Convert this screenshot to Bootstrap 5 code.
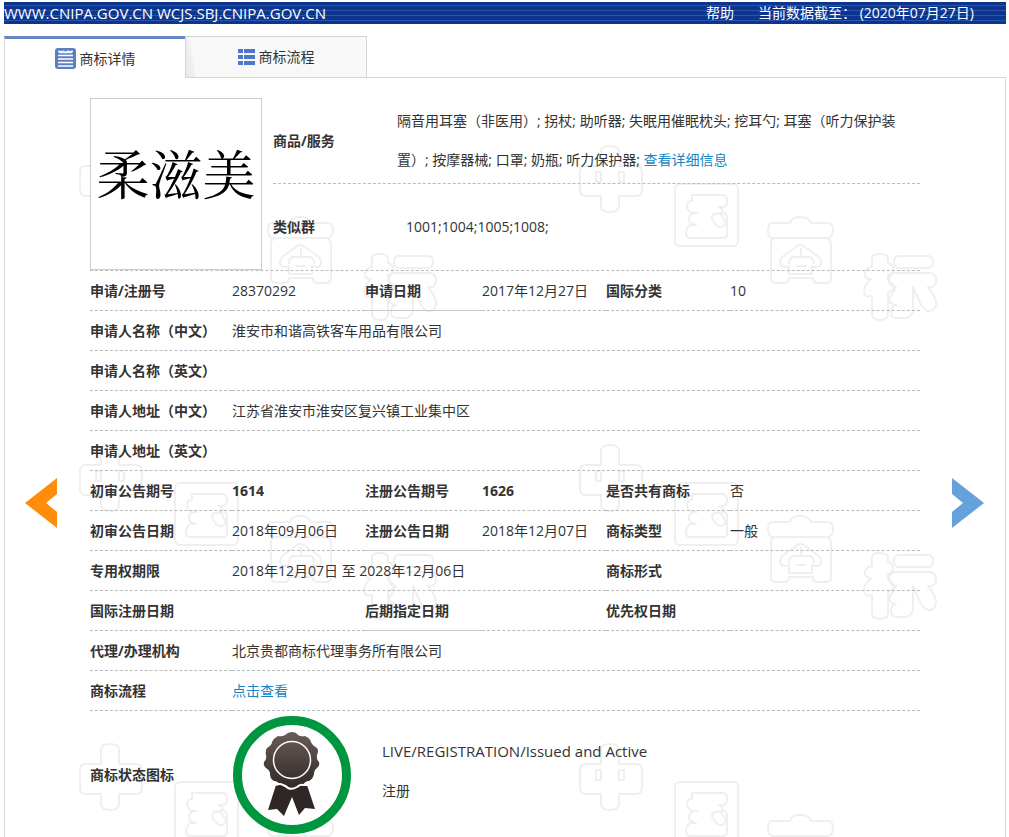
<!DOCTYPE html>
<html lang="zh-CN">
<head>
<meta charset="utf-8">
<meta name="viewport" content="width=device-width, initial-scale=1">
<title>商标详情</title>
<link href="https://cdn.jsdelivr.net/npm/bootstrap@5.3.0/dist/css/bootstrap.min.css" rel="stylesheet">
<style>
body{font-family:"Open Sans","Noto Sans CJK SC",sans-serif;font-size:14px;line-height:20px;color:#333;background:#fff}
a{color:#1585c3;text-decoration:none}
.page{padding:2px 3px 0 4px}
.topbar{height:22px;color:#fff;background:repeating-linear-gradient(#0c3590 0 3px,#2a55ab 3px 4px,#0c3590 4px 5px);padding-right:32px}
.topbar a{color:#fff}
.latin{font-size:15px}
.tabs{margin-top:12px;height:42px;border-bottom:1px solid #d5d5d5}
.tabs .nav-link{width:181px;height:41px;padding:0;border:1px solid #d5d5d5;border-bottom:0;border-radius:0;color:#333;font-size:14px}
.tabs .nav-link.active{height:42px;border-top:3px solid #6a87c4;border-right:0;background:#fff}
.tabs .nav-link:not(.active){width:182px;background:linear-gradient(80deg,#e8e8e8 0,#f0f0f0 9px,#f8f8f8 10px)}
.panel{border:solid #d5d5d5;border-width:0 1px;overflow:hidden}
.watermark{z-index:0;pointer-events:none}
.content-layer{z-index:1}
.side{width:85px;padding-top:400px}
.side button{width:32px;height:50px}
.summary{margin-top:20px;border-bottom:1px dashed #bbb}
.mark-image{width:172px;height:172px;border:1px solid #ccc;background:#fff;margin-right:11px;color:#000;font:400 53px/60px "Noto Serif CJK SC","Noto Sans CJK SC",serif;padding-bottom:24px}
.mark-image span{white-space:nowrap}
.goods{height:86px;border-bottom:1px dashed #bbb}
.goods dd{line-height:39px;padding:0 14px 2px 0}
.goods dt,.groups dt{width:124px;flex:none}
.groups{height:86px}
.groups dd{padding-left:9px}
.detail{table-layout:fixed;width:100%;margin:0;border-collapse:separate;border-spacing:0}
.detail th,.detail td{height:40px;padding:0;border-bottom:1px dashed #bbb;vertical-align:middle;white-space:nowrap}
.detail th,dt{font-weight:700}
.detail .rule{border-bottom-style:solid;border-bottom-color:#c8c8c8}
.detail .status th,.detail .status td{height:127px;border:0}
.c1{width:142px}.c2{width:133px}.c3{width:117px}.c4{width:124px}.c5{width:124px}
.status-text{line-height:39px;padding:0 0 8px 30px}
</style>
</head>
<body>
<div class="page">
<header class="topbar d-flex justify-content-between align-items-center">
<span class="latin">WWW.CNIPA.GOV.CN WCJS.SBJ.CNIPA.GOV.CN</span>
<div class="d-flex"><a href="#" class="me-4">帮助</a><span>当前数据截至： (2020年07月27日)</span></div>
</header>
<nav class="tabs d-flex">
<a class="nav-link active d-flex align-items-center justify-content-center gap-1" href="#">
<svg width="21" height="21" viewBox="0 0 21 21" aria-hidden="true"><rect width="21" height="21" rx="3" fill="#5c7fc2"/><path d="M3 3.500h2v1h2v-1h2v1h3v-1h2v1h2v-1h2M3 7.500h15M3 11h15M3 14.500h15M3 18h15" fill="none" stroke="#fff" stroke-width="1.500"/></svg>
<span>商标详情</span></a>
<a class="nav-link d-flex align-items-center justify-content-center gap-1" href="#">
<svg width="17" height="16" viewBox="0 0 17 16" fill="#5076c8" aria-hidden="true"><path d="M0 0h5v4H0zM6 0h11v4H6zM0 6h5v4H0zM6 6h11v4H6zM0 12h5v4H0zM6 12h11v4H6z"/></svg>
<span>商标流程</span></a>
</nav>
<main class="panel position-relative">
<svg class="watermark position-absolute top-0 start-0 w-100 h-100" aria-hidden="true">
<defs>
<pattern id="wm" width="500" height="299" patternUnits="userSpaceOnUse" x="74" y="64">
<g fill="none" stroke="#efefef" stroke-width="2" stroke-linejoin="round">
<path d="M22 24V10q0-6 9-6t9 6v14h17q6 0 6 6v18q0 6-6 6H40v10q0 6-9 6t-9-6V54H7q-6 0-6-6V30q0-6 6-6z"/>
<rect x="17" y="30" width="5" height="10"/><rect x="40" y="30" width="5" height="10"/>
<rect x="96" y="42" width="63" height="62" rx="5"/>
<path d="M113 53h30q5 0 5 6t-5 6h-3q5 2 3 6l-8 1q-4 4 0 8 4 6 8 5 6-2 2-8l-4-6q5-2 7 3v18q0 4-4 4h-33q-4 0-4-5t4-8h6q-7-1-7-6t5-6h3q-10 0-10-6t5-6z"/>
<path d="M211 81q1-6 10-6t11 6h17q5 0 5 7t-5 8h-2q5 1 5 6v34q0 5-5 5h-8q-5 0-5-5h-24q0 5-5 5h-8q-5 0-5-5v-34q0-5 4-6h-2q-5 0-5-8t5-7zM196 96h51"/>
<path d="m217 105-14 10q-4 6 0 9 4 2 7 0v8h23v-8q4 2 8 0 3-4-1-9l-14-10q-5-4-9 0zM222 106v10M210 122q0-7 5-7h15q5 0 5 7M217 124h10"/>
<path d="M293 116q0-4 8-4t8 5v4q5 1 5 6t-5 6v5l6 6q-1 6-6 6v22q0 6-8 6t-8-6v-18q-8 2-8-5 0-5 7-12-6 0-6-5 0-6 7-7zM320 114h29q5 0 5 6t-5 6h-29q-5 0-5-6t5-6zM316 131h34q7 0 7 7t-6 7h-2q9 11 8 18-2 7-8 6-5 0-10-13l-5-11v22q0 7-7 9h-10q-5 0-5-6t5-7q-7-1-7-6l7-12q-7-1-7-7t6-7z"/>
</g>
</pattern>
</defs>
<rect width="100%" height="100%" fill="url(#wm)"/>
</svg>
<div class="content-layer position-relative d-flex align-items-start">
<div class="side flex-shrink-0 ps-3"><button class="btn p-0 border-0 ms-1 d-block" type="button" aria-label="上一条"><svg class="d-block" width="32" height="50" viewBox="0 0 32 50"><path d="M0 25 32 0v16L21 25l11 9v16z" fill="#ff8c0a"/></svg></button></div>
<div class="flex-grow-1">
<section class="summary d-flex">
<div class="mark-image flex-shrink-0 d-flex align-items-center justify-content-center"><span>柔滋美</span></div>
<div class="flex-grow-1">
<dl class="goods d-flex align-items-center mb-0"><dt>商品/服务</dt><dd class="mb-0">隔音用耳塞（非医用）; 拐杖; 助听器; 失眠用催眠枕头; 挖耳勺; 耳塞（听力保护装置）; 按摩器械; 口罩; 奶瓶; 听力保护器; <a href="#">查看详细信息</a></dd></dl>
<dl class="groups d-flex align-items-center mb-0"><dt>类似群</dt><dd class="mb-0">1001;1004;1005;1008;</dd></dl>
</div>
</section>
<table class="detail">
<colgroup><col class="c1"><col class="c2"><col class="c3"><col class="c4"><col class="c5"><col></colgroup>
<tbody>
<tr><th scope="row">申请/注册号</th><td>28370292</td><th class="rule">申请日期</th><td>2017年12月27日</td><th>国际分类</th><td>10</td></tr>
<tr><th scope="row">申请人名称（中文）</th><td colspan="5">淮安市和谐高铁客车用品有限公司</td></tr>
<tr><th scope="row">申请人名称（英文）</th><td colspan="5"></td></tr>
<tr><th scope="row">申请人地址（中文）</th><td colspan="5">江苏省淮安市淮安区复兴镇工业集中区</td></tr>
<tr><th scope="row">申请人地址（英文）</th><td colspan="5"></td></tr>
<tr><th scope="row">初审公告期号</th><td class="fw-bold">1614</td><th>注册公告期号</th><td class="fw-bold">1626</td><th>是否共有商标</th><td>否</td></tr>
<tr><th scope="row">初审公告日期</th><td>2018年09月06日</td><th class="rule">注册公告日期</th><td>2018年12月07日</td><th>商标类型</th><td>一般</td></tr>
<tr><th scope="row">专用权期限</th><td colspan="3">2018年12月07日 至 2028年12月06日</td><th>商标形式</th><td></td></tr>
<tr><th scope="row">国际注册日期</th><td></td><th class="rule">后期指定日期</th><td></td><th>优先权日期</th><td></td></tr>
<tr><th scope="row">代理/办理机构</th><td colspan="5">北京贵都商标代理事务所有限公司</td></tr>
<tr><th scope="row">商标流程</th><td colspan="5"><a href="#">点击查看</a></td></tr>
<tr class="status"><th scope="row">商标状态图标</th><td colspan="5"><div class="d-flex align-items-center">
<svg width="120" height="120" viewBox="0 0 120 120" role="img" aria-label="注册">
<defs><linearGradient id="ribbon" x2="0" y2="1"><stop stop-color="#6a5d59"/><stop offset="1" stop-color="#2e2725"/></linearGradient></defs>
<circle cx="60" cy="60" r="54.500" fill="#fff" stroke="#00963f" stroke-width="9"/>
<path d="M44 70 36 95l9-1 7 7 8-19 7 18 6-7 10 1-8-24z" fill="#2e2725"/>
<path d="M60 17q4 0 6 3 3 2 7 1 5 2 6 6 1 3 6 6 2 3 0 7-1 4 2 7 1 4-2 6-3 2-3 6-1 5-5 7-4 0-6 4-4 4-6 3-2 2-5 2t-5-2q-4 1-7-3-2-4-6-4-4-2-4-7 0-4-4-6-3-2-2-6 3-3 2-7-1-4 1-7 5-3 5-6 2-4 6-6 4 1 7-1 3-3 7-3z" fill="url(#ribbon)"/>
<path d="M44 70q4-2 7 0 3 1 5 3 4 2 9-1 3-3 6-2h6" fill="none" stroke="#fff" stroke-width="2"/>
<circle cx="60" cy="45" r="18.500" fill="none" stroke="#fff" stroke-width="1.500"/>
</svg>
<div class="status-text"><div class="latin">LIVE/REGISTRATION/Issued and Active</div><div>注册</div></div></div></td></tr>
</tbody>
</table>
</div>
<div class="side flex-shrink-0 ps-4"><button class="btn p-0 border-0 ms-2 d-block" type="button" aria-label="下一条"><svg class="d-block" width="32" height="50" viewBox="0 0 32 50"><path d="M32 25 0 0v16l11 9-11 9v16z" fill="#65a1da"/></svg></button></div>
</div>
</main>
</div>
<script src="https://cdn.jsdelivr.net/npm/bootstrap@5.3.0/dist/js/bootstrap.bundle.min.js"></script>
</body>
</html>
